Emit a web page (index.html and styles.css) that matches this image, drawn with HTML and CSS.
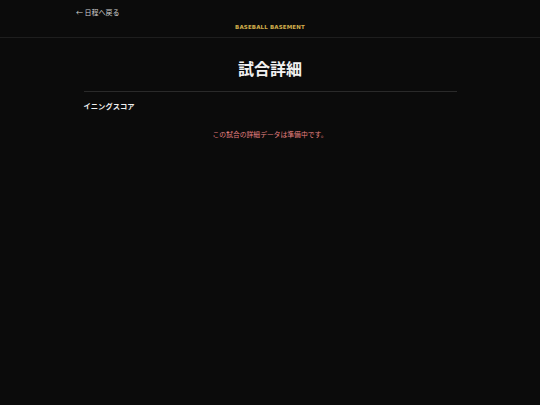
FILE: index.html
```html
<!DOCTYPE html>
<html lang="ja">
<head>
<meta charset="utf-8">
<title>試合詳細</title>
<link rel="stylesheet" href="styles.css">
</head>
<body>
<header class="site-header">
  <a class="back-link" href="#">← 日程へ戻る</a>
  <div class="brand">BASEBALL BASEMENT</div>
</header>
<main class="content">
  <h1 class="page-title">試合詳細</h1>
  <section class="section">
    <h2 class="section-title">イニングスコア</h2>
    <p class="notice">この試合の詳細データは準備中です。</p>
  </section>
</main>
</body>
</html>
```
FILE: styles.css
```css
html, body {
  margin: 0;
  padding: 0;
  background: #0b0b0b;
  color: #e6e6e6;
  font-family: "Noto Sans CJK JP", "Noto Sans", sans-serif;
}
.site-header {
  padding: 6px 0 5px;
  border-bottom: 1px solid #1e1e1e;
}
.back-link {
  display: block;
  margin-left: 76px;
  font-size: 7px;
  line-height: 12px;
  color: #cfcfcf;
  text-decoration: none;
}
.brand {
  margin-top: 4px;
  text-align: center;
  font-family: "DejaVu Sans", sans-serif;
  font-weight: bold;
  font-size: 5.5px;
  line-height: 10px;
  letter-spacing: 0.15px;
  color: #d2ae4c;
}
.content {
  width: 373px;
  margin: 0 auto;
}
.page-title {
  margin: 20px 0 0;
  padding-bottom: 13px;
  border-bottom: 1px solid #2a2a2a;
  text-align: center;
  font-size: 16px;
  line-height: 20px;
  font-weight: bold;
  color: #f2f2f2;
}
.section-title {
  margin: 8px 0 0;
  font-size: 7.3px;
  line-height: 12px;
  font-weight: bold;
  color: #f0f0f0;
}
.notice {
  margin: 17px 0 0;
  text-align: center;
  font-size: 6.8px;
  line-height: 10px;
  color: #e58080;
}
```
